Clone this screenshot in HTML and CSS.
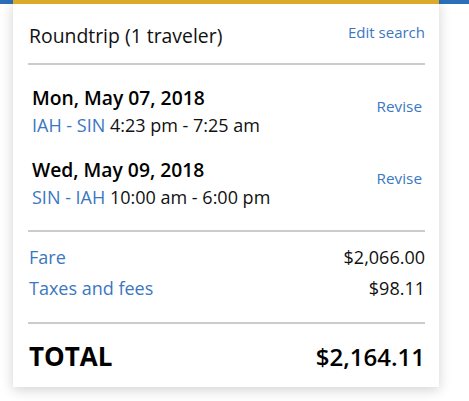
FILE: index.html
```html
<!DOCTYPE html>
<html lang="en">
<head>
<meta charset="utf-8">
<title>Trip summary</title>
<link rel="stylesheet" href="styles.css">
</head>
<body>
<div class="card">
  <div class="card-head">
    <h2 class="title">Roundtrip (1 traveler)</h2>
    <a class="link edit" href="#">Edit search</a>
  </div>
  <div class="segments">
    <div class="segment">
      <div class="seg-info">
        <div class="date">Mon, May 07, 2018</div>
        <div class="route"><span class="airports">IAH - SIN</span> 4:23 pm - 7:25 am</div>
      </div>
      <a class="link revise" href="#">Revise</a>
    </div>
    <div class="segment">
      <div class="seg-info">
        <div class="date">Wed, May 09, 2018</div>
        <div class="route"><span class="airports">SIN - IAH</span> 10:00 am - 6:00 pm</div>
      </div>
      <a class="link revise" href="#">Revise</a>
    </div>
  </div>
  <div class="prices">
    <div class="price-row"><a class="link label" href="#">Fare</a><span class="amount">$2,066.00</span></div>
    <div class="price-row"><a class="link label" href="#">Taxes and fees</a><span class="amount">$98.11</span></div>
  </div>
  <div class="total">
    <span class="total-label">TOTAL</span>
    <span class="total-amount">$2,164.11</span>
  </div>
</div>
</body>
</html>
```
FILE: styles.css
```css
* { box-sizing: border-box; }
html, body { margin: 0; padding: 0; }
body {
  font-family: "Open Sans", "Liberation Sans", sans-serif;
  color: #111;
  background: linear-gradient(#2b6fb9 0, #2b6fb9 4px, #fff 4px) no-repeat;
  background-color: #fff;
  width: 469px;
  height: 401px;
  overflow: hidden;
}
.card {
  margin-left: 13px;
  width: 426px;
  height: 387px;
  background: #fff;
  border-top: 4px solid #dcaa2b;
  box-shadow: 0 3px 12px rgba(0, 0, 0, 0.18);
  padding: 0 14px 0 15px;
}
.link { color: #3b77c1; text-decoration: none; }
.card-head {
  display: flex;
  justify-content: space-between;
  align-items: flex-start;
  padding-top: 18px;
  padding-bottom: 14px;
  border-bottom: 2px solid #cccccc;
}
.title {
  margin: 1px 0 0 1px;
  font-size: 19.4px;
  line-height: 26px;
  font-weight: 400;
  color: #111;
}
.edit { font-size: 15px; line-height: 20px; }
.segments {
  display: flex;
  flex-direction: column;
  gap: 18px;
  padding: 20px 0 19px 4px;
  border-bottom: 2px solid #cccccc;
}
.segment {
  display: flex;
  justify-content: space-between;
  align-items: flex-start;
}
.date {
  font-size: 19.3px;
  line-height: 26px;
  font-weight: 600;
  color: #000;
}
.route {
  font-size: 18px;
  line-height: 28px;
  color: #111;
}
.airports { color: #3b77c1; }
.revise {
  font-size: 15.3px;
  line-height: 20px;
  margin-top: 11px;
  margin-right: 3px;
}
.prices {
  display: flex;
  flex-direction: column;
  gap: 5px;
  padding: 12px 0 21px 1px;
  border-bottom: 2px solid #cccccc;
}
.price-row {
  display: flex;
  justify-content: space-between;
  font-size: 18px;
  line-height: 26px;
}
.amount { color: #111; }
.total {
  display: flex;
  justify-content: space-between;
  align-items: baseline;
  padding: 16px 0 0 1px;
  line-height: 32px;
  color: #000;
}
.total-label { font-size: 26px; font-weight: 700; }
.total-amount { font-size: 24px; font-weight: 600; }
```
